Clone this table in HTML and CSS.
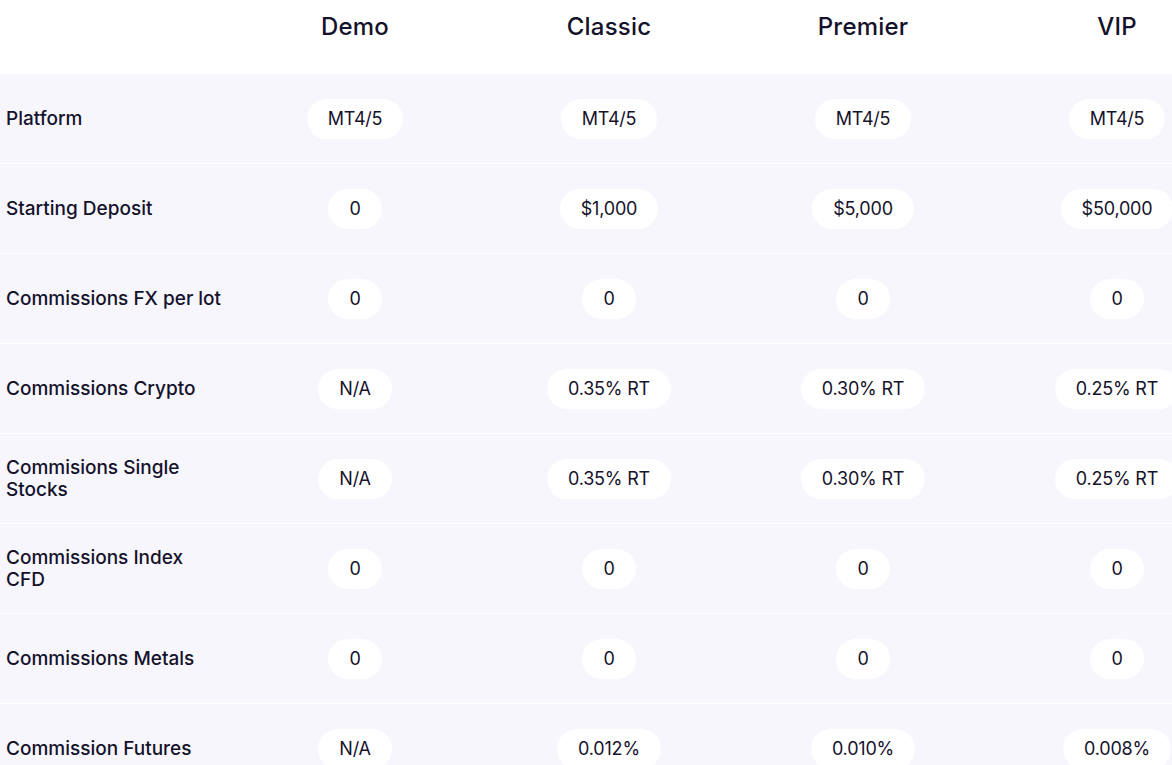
FILE: index.html
```html
<!DOCTYPE html>
<html>
<head>
<meta charset="utf-8">
<link rel="stylesheet" href="styles.css">
</head>
<body>
<div class="table">
  <div class="row head">
    <div class="label"></div>
    <div class="col">Demo</div>
    <div class="col">Classic</div>
    <div class="col">Premier</div>
    <div class="col">VIP</div>
  </div>
  <div class="body">
    <div class="row">
      <div class="label">Platform</div>
      <div class="cell"><span class="pill">MT4/5</span></div>
      <div class="cell"><span class="pill">MT4/5</span></div>
      <div class="cell"><span class="pill">MT4/5</span></div>
      <div class="cell"><span class="pill">MT4/5</span></div>
    </div>
    <div class="row">
      <div class="label">Starting Deposit</div>
      <div class="cell"><span class="pill">0</span></div>
      <div class="cell"><span class="pill">$1,000</span></div>
      <div class="cell"><span class="pill">$5,000</span></div>
      <div class="cell"><span class="pill">$50,000</span></div>
    </div>
    <div class="row">
      <div class="label">Commissions FX per lot</div>
      <div class="cell"><span class="pill">0</span></div>
      <div class="cell"><span class="pill">0</span></div>
      <div class="cell"><span class="pill">0</span></div>
      <div class="cell"><span class="pill">0</span></div>
    </div>
    <div class="row">
      <div class="label">Commissions Crypto</div>
      <div class="cell"><span class="pill">N/A</span></div>
      <div class="cell"><span class="pill">0.35% RT</span></div>
      <div class="cell"><span class="pill">0.30% RT</span></div>
      <div class="cell"><span class="pill">0.25% RT</span></div>
    </div>
    <div class="row">
      <div class="label">Commisions Single<br>Stocks</div>
      <div class="cell"><span class="pill">N/A</span></div>
      <div class="cell"><span class="pill">0.35% RT</span></div>
      <div class="cell"><span class="pill">0.30% RT</span></div>
      <div class="cell"><span class="pill">0.25% RT</span></div>
    </div>
    <div class="row">
      <div class="label">Commissions Index<br>CFD</div>
      <div class="cell"><span class="pill">0</span></div>
      <div class="cell"><span class="pill">0</span></div>
      <div class="cell"><span class="pill">0</span></div>
      <div class="cell"><span class="pill">0</span></div>
    </div>
    <div class="row">
      <div class="label">Commissions Metals</div>
      <div class="cell"><span class="pill">0</span></div>
      <div class="cell"><span class="pill">0</span></div>
      <div class="cell"><span class="pill">0</span></div>
      <div class="cell"><span class="pill">0</span></div>
    </div>
    <div class="row">
      <div class="label">Commission Futures</div>
      <div class="cell"><span class="pill">N/A</span></div>
      <div class="cell"><span class="pill">0.012%</span></div>
      <div class="cell"><span class="pill">0.010%</span></div>
      <div class="cell"><span class="pill">0.008%</span></div>
    </div>
  </div>
</div>
</body>
</html>
```

FILE: styles.css
```css
html, body {
  margin: 0;
  padding: 0;
  background: #ffffff;
  overflow: hidden;
}
body {
  width: 1172px;
  height: 765px;
  font-family: "Inter", "Noto Sans", sans-serif;
  color: #15122b;
}
.table {
  width: 1245px;
}
.row {
  display: grid;
  grid-template-columns: 228px repeat(4, 254px);
  align-items: center;
}
.head {
  height: 73px;
  align-items: start;
  background: #ffffff;
}
.head .col {
  text-align: center;
  font-size: 24px;
  font-weight: 500;
  letter-spacing: 0.2px;
  padding-top: 12px;
}
.body {
  background: #f7f6fd;
}
.body .row {
  height: 89px;
  border-top: 1px solid #ffffff;
}
.label {
  padding-left: 6px;
  font-size: 19px;
  font-weight: 500;
  letter-spacing: 0;
  line-height: 22px;
  white-space: nowrap;
}
.cell {
  display: flex;
  justify-content: center;
}
.pill {
  display: inline-flex;
  align-items: center;
  height: 40px;
  padding: 0 21px;
  border-radius: 20px;
  background: #ffffff;
  font-size: 18px;
  font-weight: 400;
  letter-spacing: -0.2px;
}
```
